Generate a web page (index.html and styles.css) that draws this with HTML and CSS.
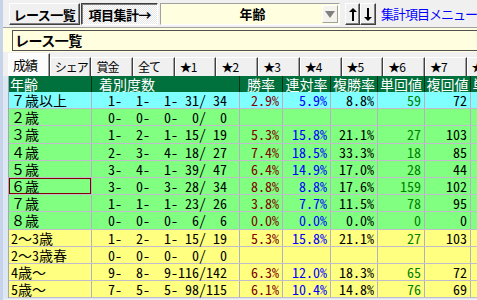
FILE: index.html
```html
<!DOCTYPE html>
<html lang="ja">
<head>
  <meta charset="UTF-8" />
  <title>項目集計</title>
  <link rel="stylesheet" href="styles.css">
</head>
<body>
  <!-- Toolbar -->
  <div class="toolbar">
    <button class="btn btn-main">レース一覧</button>
    <button class="btn btn-pressed">項目集計→</button>
    <div class="combo">
      <span class="combo-text">年齢</span>
      <span class="combo-drop">
        <svg width="10" height="7" viewBox="0 0 10 7"><polygon points="0,0 10,0 5,7" fill="#808080"/></svg>
      </span>
    </div>
    <button class="btn btn-arrow">
      <svg width="8" height="13" viewBox="0 0 8 13"><polygon points="4,0 0,4 8,4" fill="#000"/><rect x="3" y="3" width="2" height="10" fill="#000"/></svg>
    </button>
    <button class="btn btn-arrow">
      <svg width="8" height="13" viewBox="0 0 8 13"><rect x="3" y="0" width="2" height="10" fill="#000"/><polygon points="4,13 0,9 8,9" fill="#000"/></svg>
    </button>
    <a class="menu-link">集計項目メニュー</a>
  </div>

  <!-- Title -->
  <div class="title-panel">
    <div class="title-box">レース一覧</div>
  </div>

  <!-- Tabs -->
  <div class="tabs">
    <div class="tab active">成績</div>
    <div class="tab">シェア</div>
    <div class="tab">賞金</div>
    <div class="tab">全て</div>
    <div class="tab">★1</div>
    <div class="tab">★2</div>
    <div class="tab">★3</div>
    <div class="tab">★4</div>
    <div class="tab">★5</div>
    <div class="tab">★6</div>
    <div class="tab">★7</div>
    <div class="tab">★8</div>
  </div>

  <!-- Stats grid -->
  <div class="grid-wrap">
    <div class="grid">
      <div class="row head">
        <div class="cell first">年齢</div>
        <div class="cell">着別度数</div>
        <div class="cell center">勝率</div>
        <div class="cell center">連対率</div>
        <div class="cell center">複勝率</div>
        <div class="cell center">単回値</div>
        <div class="cell center">複回値</div>
        <div class="cell center">単回値</div>
      </div>

      <div class="row cyan">
        <div class="cell first">７歳以上</div>
        <div class="cell count">  1-  1-  1- 31/ 34</div>
        <div class="cell num win">2.9%</div>
        <div class="cell num ren">5.9%</div>
        <div class="cell num">8.8%</div>
        <div class="cell num tan">59</div>
        <div class="cell num">72</div>
        <div class="cell num"></div>
      </div>

      <div class="row green">
        <div class="cell first">２歳</div>
        <div class="cell count">  0-  0-  0-  0/  0</div>
        <div class="cell num"></div>
        <div class="cell num"></div>
        <div class="cell num"></div>
        <div class="cell num"></div>
        <div class="cell num"></div>
        <div class="cell num"></div>
      </div>

      <div class="row green">
        <div class="cell first">３歳</div>
        <div class="cell count">  1-  2-  1- 15/ 19</div>
        <div class="cell num win">5.3%</div>
        <div class="cell num ren">15.8%</div>
        <div class="cell num">21.1%</div>
        <div class="cell num tan">27</div>
        <div class="cell num">103</div>
        <div class="cell num"></div>
      </div>

      <div class="row green">
        <div class="cell first">４歳</div>
        <div class="cell count">  2-  3-  4- 18/ 27</div>
        <div class="cell num win">7.4%</div>
        <div class="cell num ren">18.5%</div>
        <div class="cell num">33.3%</div>
        <div class="cell num tan">18</div>
        <div class="cell num">85</div>
        <div class="cell num"></div>
      </div>

      <div class="row green">
        <div class="cell first">５歳</div>
        <div class="cell count">  3-  4-  1- 39/ 47</div>
        <div class="cell num win">6.4%</div>
        <div class="cell num ren">14.9%</div>
        <div class="cell num">17.0%</div>
        <div class="cell num tan">28</div>
        <div class="cell num">44</div>
        <div class="cell num"></div>
      </div>

      <div class="row green">
        <div class="cell first selected">６歳</div>
        <div class="cell count">  3-  0-  3- 28/ 34</div>
        <div class="cell num win">8.8%</div>
        <div class="cell num ren">8.8%</div>
        <div class="cell num">17.6%</div>
        <div class="cell num tan">159</div>
        <div class="cell num">102</div>
        <div class="cell num"></div>
      </div>

      <div class="row green">
        <div class="cell first">７歳</div>
        <div class="cell count">  1-  1-  1- 23/ 26</div>
        <div class="cell num win">3.8%</div>
        <div class="cell num ren">7.7%</div>
        <div class="cell num">11.5%</div>
        <div class="cell num tan">78</div>
        <div class="cell num">95</div>
        <div class="cell num"></div>
      </div>

      <div class="row green">
        <div class="cell first">８歳</div>
        <div class="cell count">  0-  0-  0-  6/  6</div>
        <div class="cell num win">0.0%</div>
        <div class="cell num ren">0.0%</div>
        <div class="cell num">0.0%</div>
        <div class="cell num tan">0</div>
        <div class="cell num">0</div>
        <div class="cell num"></div>
      </div>

      <div class="row yellow">
        <div class="cell first">2～3歳</div>
        <div class="cell count">  1-  2-  1- 15/ 19</div>
        <div class="cell num win">5.3%</div>
        <div class="cell num ren">15.8%</div>
        <div class="cell num">21.1%</div>
        <div class="cell num tan">27</div>
        <div class="cell num">103</div>
        <div class="cell num"></div>
      </div>

      <div class="row yellow">
        <div class="cell first">2～3歳春</div>
        <div class="cell count">  0-  0-  0-  0/  0</div>
        <div class="cell num"></div>
        <div class="cell num"></div>
        <div class="cell num"></div>
        <div class="cell num"></div>
        <div class="cell num"></div>
        <div class="cell num"></div>
      </div>

      <div class="row yellow">
        <div class="cell first">4歳～</div>
        <div class="cell count">  9-  8-  9-116/142</div>
        <div class="cell num win">6.3%</div>
        <div class="cell num ren">12.0%</div>
        <div class="cell num">18.3%</div>
        <div class="cell num tan">65</div>
        <div class="cell num">72</div>
        <div class="cell num"></div>
      </div>

      <div class="row yellow">
        <div class="cell first">5歳～</div>
        <div class="cell count">  7-  5-  5- 98/115</div>
        <div class="cell num win">6.1%</div>
        <div class="cell num ren">10.4%</div>
        <div class="cell num">14.8%</div>
        <div class="cell num tan">76</div>
        <div class="cell num">69</div>
        <div class="cell num"></div>
      </div>
    </div>
  </div>
</body>
</html>
```

FILE: styles.css
```css
body {
  margin: 0;
  width: 474px;
  height: 300px;
  overflow: hidden;
  background: #f0f0f0;
  border-left: 3px solid #c6d3e8;
  font-family: "Noto Sans CJK JP", sans-serif;
  font-size: 13px;
}

/* toolbar */
.toolbar {
  display: flex;
  align-items: flex-start;
  height: 28px;
  padding: 3px 0 0 6px;
  box-sizing: border-box;
  border-bottom: 1px solid #a0a0a0;
  white-space: nowrap;
  overflow: hidden;
}
.btn {
  height: 22px;
  box-sizing: border-box;
  padding: 0;
  border: 1px solid;
  border-color: #ffffff #404040 #404040 #ffffff;
  box-shadow: inset -1px -1px 0 #808080;
  background: #f0f0f0;
  font-family: "Noto Sans CJK JP", sans-serif;
  font-weight: bold;
  font-size: 13px;
  line-height: 19px;
  letter-spacing: -0.5px;
  color: #000;
}
.btn-main {
  width: 73px;
  margin-right: 1px;
}
.btn-pressed {
  width: 80px;
  margin-right: 2px;
  border-color: #404040 #ffffff #ffffff #404040;
  box-shadow: inset 1px 1px 0 #808080;
  background-color: #ffffff;
  background-image: repeating-conic-gradient(#e4e4e4 0 25%, #ffffff 0 50%);
  background-size: 2px 2px;
}
.combo {
  display: flex;
  align-items: center;
  width: 185px;
  height: 22px;
  box-sizing: border-box;
  margin-right: 5px;
  border: 1px solid;
  border-color: #a0a0a0 #ffffff #ffffff #a0a0a0;
  background: #ffffe0;
}
.combo-text {
  flex: 1;
  padding-left: 78px;
  font-weight: bold;
  font-size: 13px;
  line-height: 20px;
}
.combo-drop {
  display: flex;
  align-items: center;
  justify-content: center;
  width: 16px;
  height: 18px;
  margin-right: 1px;
  box-sizing: border-box;
  border: 1px solid;
  border-color: #ffffff #a0a0a0 #a0a0a0 #ffffff;
  background: #f4f4ec;
}
.btn-arrow {
  display: flex;
  align-items: center;
  justify-content: center;
  width: 16px;
}
.menu-link {
  margin-left: 5px;
  color: #0000ff;
  font-size: 13px;
  line-height: 22px;
  letter-spacing: -1px;
}

/* title panel */
.title-panel {
  display: flex;
  height: 24px;
  padding: 2px 0 0 9px;
  box-sizing: border-box;
  background: #ffffe0;
}
.title-box {
  flex: 1;
  height: 21px;
  box-sizing: border-box;
  margin-right: -10px;
  padding-left: 2px;
  border: 1px solid #505050;
  font-weight: bold;
  font-size: 14px;
  line-height: 19px;
  letter-spacing: -0.5px;
}

/* tabs */
.tabs {
  display: flex;
  align-items: flex-end;
  height: 24px;
  padding-left: 5px;
  white-space: nowrap;
  overflow: hidden;
}
.tab {
  flex: none;
  width: 41.7px;
  height: 19px;
  box-sizing: border-box;
  padding-left: 4px;
  border-top: 1px solid #ffffff;
  border-left: 1px solid #ffffff;
  border-right: 1px solid #404040;
  box-shadow: inset -1px 0 0 #a0a0a0;
  font-size: 12px;
  line-height: 17px;
  letter-spacing: -1px;
}
.tab.active {
  height: 23px;
  background: #fcfcfc;
  font-size: 13px;
  line-height: 21px;
}

/* grid */
.grid-wrap {
  height: 223px;
  padding-left: 5px;
  background: #dde6f3;
  overflow: hidden;
}
.grid {
  width: 600px;
  border-left: 1px solid #a4a4b4;
  font-family: "Noto Sans Mono CJK JP", "Noto Sans CJK JP", monospace;
  font-size: 14px;
}
.row {
  display: grid;
  grid-template-columns: 83px 148px 43px 48px 47px 47px 46px 46px;
  height: 17.2px;
  box-sizing: border-box;
  border-bottom: 1px solid #c0bccc;
}
.row.head {
  height: 16px;
  border-bottom: none;
  background: #00703c;
  color: #ffffff;
}
.row.cyan {
  background: #80ffff;
}
.row.green {
  background: #80ff80;
}
.row.yellow {
  background: #ffff80;
}
.cell {
  box-sizing: border-box;
  padding: 0 3px;
  border-right: 1px solid #b4b0c4;
  line-height: 16px;
  white-space: pre;
}
.head .cell {
  border-right-color: #00301a;
  padding-left: 7px;
}
.head .cell.first {
  padding-left: 1px;
}
.head .cell.center {
  padding: 0;
  text-align: center;
}
.cell.first {
  padding-left: 2px;
}
.cell.count {
  padding-left: 2px;
}
.cell.num {
  text-align: right;
}
.cell.selected {
  box-shadow: inset 0 0 0 1px #800000;
}
.win {
  color: #800000;
}
.ren {
  color: #0000ff;
}
.tan {
  color: #008000;
}
```
